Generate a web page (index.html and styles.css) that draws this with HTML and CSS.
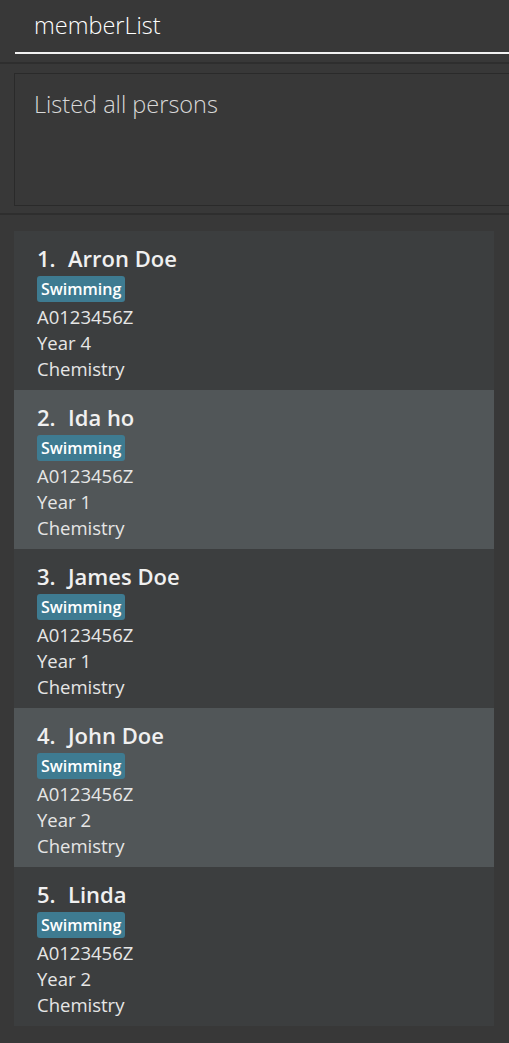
FILE: index.html
```html
<!DOCTYPE html>
<html>
<head>
<meta charset="utf-8">
<link rel="stylesheet" href="styles.css">
</head>
<body>
<div class="app">
  <div class="command-area">
    <div class="command-box">memberList</div>
  </div>
  <div class="divider"></div>
  <div class="result-area">
    <div class="result-box">Listed all persons</div>
  </div>
  <div class="divider"></div>
  <div class="list-area">
    <div class="list">
      <div class="card even">
        <div class="name"><span class="idx">1.</span>Arron Doe</div>
        <div class="tags"><span class="tag">Swimming</span></div>
        <div class="line">A0123456Z</div>
        <div class="line">Year 4</div>
        <div class="line">Chemistry</div>
      </div>
      <div class="card odd">
        <div class="name"><span class="idx">2.</span>Ida ho</div>
        <div class="tags"><span class="tag">Swimming</span></div>
        <div class="line">A0123456Z</div>
        <div class="line">Year 1</div>
        <div class="line">Chemistry</div>
      </div>
      <div class="card even">
        <div class="name"><span class="idx">3.</span>James Doe</div>
        <div class="tags"><span class="tag">Swimming</span></div>
        <div class="line">A0123456Z</div>
        <div class="line">Year 1</div>
        <div class="line">Chemistry</div>
      </div>
      <div class="card odd">
        <div class="name"><span class="idx">4.</span>John Doe</div>
        <div class="tags"><span class="tag">Swimming</span></div>
        <div class="line">A0123456Z</div>
        <div class="line">Year 2</div>
        <div class="line">Chemistry</div>
      </div>
      <div class="card even">
        <div class="name"><span class="idx">5.</span>Linda</div>
        <div class="tags"><span class="tag">Swimming</span></div>
        <div class="line">A0123456Z</div>
        <div class="line">Year 2</div>
        <div class="line">Chemistry</div>
      </div>
    </div>
  </div>
</div>
</body>
</html>
```
FILE: styles.css
```css
html, body {
  margin: 0;
  padding: 0;
  background: #383838;
}
body {
  width: 509px;
  height: 1043px;
  overflow: hidden;
  font-family: "Open Sans", "Noto Sans", sans-serif;
  color: #ffffff;
}
.app {
  display: flex;
  flex-direction: column;
}
.command-area {
  height: 62px;
  padding-left: 15px;
  box-sizing: border-box;
}
.command-box {
  height: 54px;
  box-sizing: border-box;
  border-bottom: 2px solid #f2f2f2;
  padding-left: 19px;
  padding-top: 10px;
  font-size: 23.5px;
  font-weight: 300;
  line-height: 30px;
  color: #ffffff;
  margin-right: -20px;
}
.divider {
  height: 2px;
  background: #2e2e2e;
}
.result-area {
  height: 149px;
  padding: 9px 0 0 14px;
  box-sizing: border-box;
}
.result-box {
  height: 133px;
  box-sizing: border-box;
  border: 1px solid #2a2a2a;
  border-right: none;
  margin-right: -10px;
  padding: 15px 0 0 19px;
  font-size: 23.5px;
  font-weight: 300;
  line-height: 30px;
  color: #d8d8d8;
}
.list-area {
  padding: 16px 15px 0 14px;
}
.list {
  display: flex;
  flex-direction: column;
}
.card {
  height: 159px;
  box-sizing: border-box;
  padding: 12px 23px 0 23px;
  display: flex;
  flex-direction: column;
}
.card.even { background: #3c3e3f; }
.card.odd { background: #515658; }
.name {
  font-size: 22px;
  font-weight: 600;
  line-height: 30px;
  color: #f0f0f0;
  height: 33px;
}
.idx {
  display: inline-block;
  width: 31px;
}
.tags {
  display: flex;
  height: 28px;
  align-items: flex-start;
}
.tag {
  background: #3e7b91;
  color: #ffffff;
  font-size: 16px;
  font-weight: 600;
  line-height: 26px;
  height: 26px;
  padding: 0 4px;
  border-radius: 3px;
}
.line {
  font-size: 18.5px;
  line-height: 26px;
  color: #e6e6e6;
}
```
